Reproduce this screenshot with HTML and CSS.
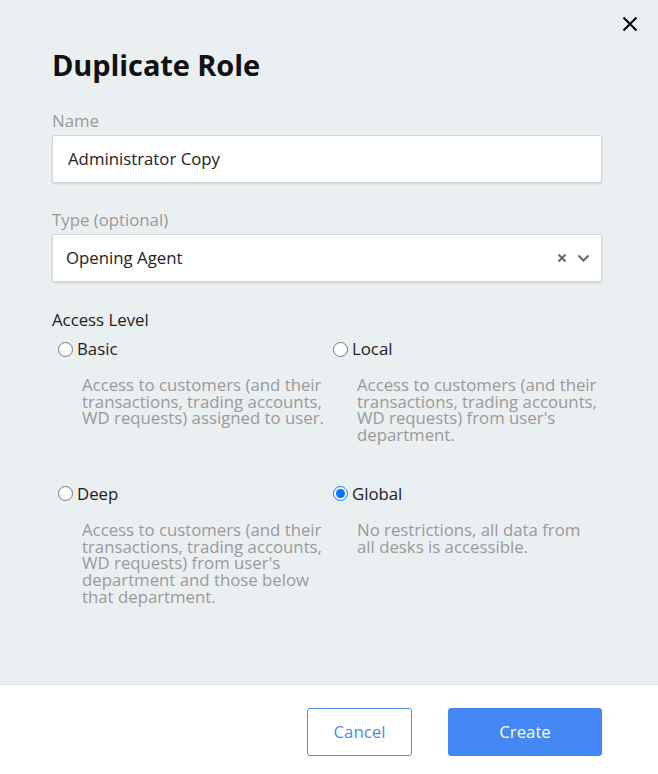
FILE: index.html
```html
<!DOCTYPE html>
<html lang="en">
<head>
<meta charset="utf-8">
<title>Duplicate Role</title>
<link rel="stylesheet" href="styles.css">
</head>
<body>
<div class="dialog">
  <div class="main">
    <button class="close" aria-label="Close">
      <svg width="16" height="16" viewBox="0 0 16 16"><path d="M1.5 1.5L14.5 14.5M14.5 1.5L1.5 14.5" stroke="#000" stroke-width="2" fill="none"/></svg>
    </button>
    <h1 class="title">Duplicate Role</h1>
    <div class="field">
      <label class="label">Name</label>
      <div class="input">Administrator Copy</div>
    </div>
    <div class="field">
      <label class="label">Type (optional)</label>
      <div class="input select">
        <span class="select-value">Opening Agent</span>
        <span class="select-icons">
          <svg width="10" height="10" viewBox="0 0 10 10"><path d="M1.5 1.5L8.5 8.5M8.5 1.5L1.5 8.5" stroke="#666" stroke-width="2" fill="none"/></svg>
          <svg width="13" height="9" viewBox="0 0 13 9"><path d="M1.5 1.5L6.5 6.5L11.5 1.5" stroke="#666" stroke-width="2" fill="none"/></svg>
        </span>
      </div>
    </div>
    <div class="access-title">Access Level</div>
    <div class="options">
      <div class="option">
        <label class="option-label"><input type="radio" name="lvl"> Basic</label>
        <p class="desc">Access to customers (and their transactions, trading accounts, WD requests) assigned to user.</p>
      </div>
      <div class="option">
        <label class="option-label"><input type="radio" name="lvl"> Local</label>
        <p class="desc">Access to customers (and their transactions, trading accounts, WD requests) from user's department.</p>
      </div>
      <div class="option">
        <label class="option-label"><input type="radio" name="lvl"> Deep</label>
        <p class="desc">Access to customers (and their transactions, trading accounts, WD requests) from user's department and those below that department.</p>
      </div>
      <div class="option">
        <label class="option-label"><input type="radio" name="lvl" checked> Global</label>
        <p class="desc">No restrictions, all data from all desks is accessible.</p>
      </div>
    </div>
  </div>
  <div class="footer">
    <button class="btn btn-cancel">Cancel</button>
    <button class="btn btn-create">Create</button>
  </div>
</div>
</body>
</html>
```

FILE: styles.css
```css
* { box-sizing: border-box; }
html, body { margin: 0; padding: 0; }
body {
  font-family: "Open Sans", "Liberation Sans", sans-serif;
  background: #eaeff2;
  color: #222;
}
.dialog {
  height: 774px;
  display: flex;
  flex-direction: column;
}
.main {
  flex: 1;
  position: relative;
  padding: 48px 56px 0 52px;
  border-bottom: 1px solid #dde2e6;
}
.close {
  position: absolute;
  top: 16px;
  right: 20px;
  width: 16px;
  height: 16px;
  padding: 0;
  border: 0;
  background: none;
  display: flex;
}
.title {
  margin: 0 0 28px;
  font-size: 29px;
  line-height: 34px;
  font-weight: 700;
  color: #111;
  letter-spacing: -0.1px;
}
.field { margin-bottom: 26px; }
.label {
  display: block;
  font-size: 16.8px;
  line-height: 22px;
  color: #9a9a9a;
  margin-bottom: 3px;
}
.input {
  height: 48px;
  background: #fff;
  border: 1px solid #d3d7da;
  border-radius: 2px;
  box-shadow: 0 1px 2px rgba(0,0,0,0.12);
  padding: 0 15px 2px;
  display: flex;
  align-items: center;
  font-size: 16.8px;
  color: #222;
}
.select { padding: 0 11px 2px 13px; justify-content: space-between; }
.select-icons { display: flex; align-items: center; gap: 10px; padding-top: 2px; }
.access-title {
  font-size: 16.8px;
  line-height: 22px;
  color: #222;
  padding-top: 1px;
}
.options {
  display: grid;
  grid-template-columns: 275px 275px;
  row-gap: 39px;
  margin-top: 7px;
}
.option-label {
  display: flex;
  align-items: center;
  font-size: 16.8px;
  line-height: 22px;
  color: #222;
}
.option-label input {
  margin: 0 4px 0 6px;
  width: 15px;
  height: 15px;
}
.desc {
  margin: 17px 0 0 30px;
  font-size: 16.8px;
  line-height: 16.7px;
  color: #9a9a9a;
  width: 245px;
}
.footer {
  height: 89px;
  background: #fff;
  display: flex;
  justify-content: flex-end;
  align-items: flex-start;
  padding: 23px 56px 0 0;
  gap: 36px;
}
.btn {
  height: 48px;
  font-family: inherit;
  font-size: 16.8px;
  border-radius: 3px;
  cursor: pointer;
  padding-bottom: 2px;
}
.btn-cancel {
  width: 105px;
  background: #fff;
  border: 1px solid #4a8af4;
  color: #4a8af4;
}
.btn-create {
  width: 154px;
  background: #4588f5;
  border: 1px solid #4588f5;
  color: #fff;
}
```
